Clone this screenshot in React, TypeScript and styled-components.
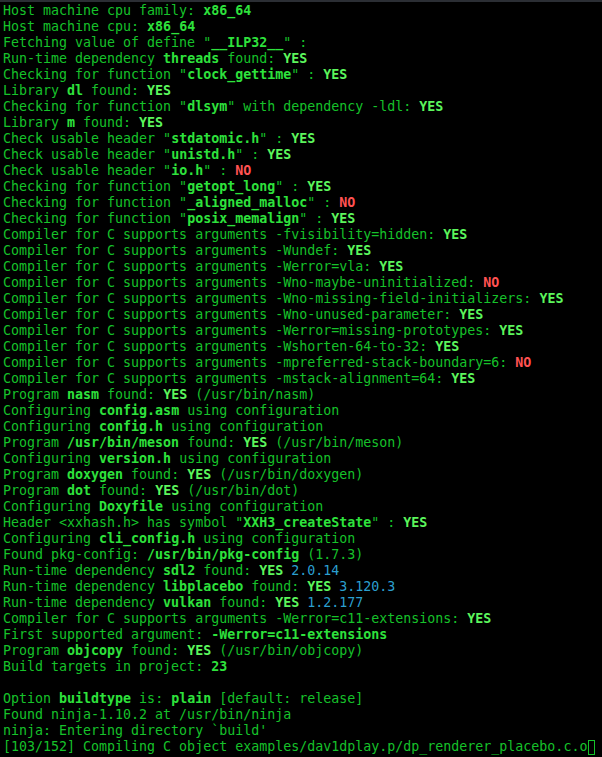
import React from "react";
import styled, { createGlobalStyle } from "styled-components";

const Global = createGlobalStyle`
  html, body { margin: 0; padding: 0; background: #000; }
  #root { width: 602px; height: 757px; }
`;

const Screen = styled.div`
  width: 602px;
  height: 757px;
  box-sizing: border-box;
  background: #000;
  border-top: 2px solid #2b2e34;
  padding: 1px 0 0 3px;
  overflow: hidden;
`;

const Output = styled.pre`
  margin: 0;
  font-family: "DejaVu Sans Mono", "Liberation Mono", monospace;
  font-size: 13.3px;
  line-height: 16px;
  color: #16c22a;
  white-space: pre;
`;

const Line = styled.div`
  height: 16px;
`;

const B = styled.span`
  font-weight: bold;
  color: #2ee23c;
`;

const Y = styled.span`
  font-weight: bold;
  color: #5cf65c;
`;

const N = styled.span`
  font-weight: bold;
  color: #ff5252;
`;

const V = styled.span`
  color: #2b9fcf;
`;

const Cursor = styled.span`
  display: inline-block;
  width: 7px;
  height: 15px;
  border: 1px solid #16c22a;
  box-sizing: border-box;
  margin-left: 1px;
  vertical-align: top;
  margin-top: 1px;
`;

const C = "Compiler for C supports arguments ";

export default function App() {
  const lines: React.ReactNode[] = [
    <>Host machine cpu family: <B>x86_64</B></>,
    <>Host machine cpu: <B>x86_64</B></>,
    <>Fetching value of define "<B>__ILP32__</B>" : </>,
    <>Run-time dependency <B>threads</B> found: <Y>YES</Y></>,
    <>Checking for function "<B>clock_gettime</B>" : <Y>YES</Y></>,
    <>Library <B>dl</B> found: <Y>YES</Y></>,
    <>Checking for function "<B>dlsym</B>" with dependency -ldl: <Y>YES</Y></>,
    <>Library <B>m</B> found: <Y>YES</Y></>,
    <>Check usable header "<B>stdatomic.h</B>" : <Y>YES</Y></>,
    <>Check usable header "<B>unistd.h</B>" : <Y>YES</Y></>,
    <>Check usable header "<B>io.h</B>" : <N>NO</N></>,
    <>Checking for function "<B>getopt_long</B>" : <Y>YES</Y></>,
    <>Checking for function "<B>_aligned_malloc</B>" : <N>NO</N></>,
    <>Checking for function "<B>posix_memalign</B>" : <Y>YES</Y></>,
    <>{C}-fvisibility=hidden: <Y>YES</Y></>,
    <>{C}-Wundef: <Y>YES</Y></>,
    <>{C}-Werror=vla: <Y>YES</Y></>,
    <>{C}-Wno-maybe-uninitialized: <N>NO</N></>,
    <>{C}-Wno-missing-field-initializers: <Y>YES</Y></>,
    <>{C}-Wno-unused-parameter: <Y>YES</Y></>,
    <>{C}-Werror=missing-prototypes: <Y>YES</Y></>,
    <>{C}-Wshorten-64-to-32: <Y>YES</Y></>,
    <>{C}-mpreferred-stack-boundary=6: <N>NO</N></>,
    <>{C}-mstack-alignment=64: <Y>YES</Y></>,
    <>Program <B>nasm</B> found: <Y>YES</Y> (/usr/bin/nasm)</>,
    <>Configuring <B>config.asm</B> using configuration</>,
    <>Configuring <B>config.h</B> using configuration</>,
    <>Program <B>/usr/bin/meson</B> found: <Y>YES</Y> (/usr/bin/meson)</>,
    <>Configuring <B>version.h</B> using configuration</>,
    <>Program <B>doxygen</B> found: <Y>YES</Y> (/usr/bin/doxygen)</>,
    <>Program <B>dot</B> found: <Y>YES</Y> (/usr/bin/dot)</>,
    <>Configuring <B>Doxyfile</B> using configuration</>,
    <>Header &lt;xxhash.h&gt; has symbol "<B>XXH3_createState</B>" : <Y>YES</Y></>,
    <>Configuring <B>cli_config.h</B> using configuration</>,
    <>Found pkg-config: <B>/usr/bin/pkg-config</B> (1.7.3)</>,
    <>Run-time dependency <B>sdl2</B> found: <Y>YES</Y> <V>2.0.14</V></>,
    <>Run-time dependency <B>libplacebo</B> found: <Y>YES</Y> <V>3.120.3</V></>,
    <>Run-time dependency <B>vulkan</B> found: <Y>YES</Y> <V>1.2.177</V></>,
    <>{C}-Werror=c11-extensions: <Y>YES</Y></>,
    <>First supported argument: <B>-Werror=c11-extensions</B></>,
    <>Program <B>objcopy</B> found: <Y>YES</Y> (/usr/bin/objcopy)</>,
    <>Build targets in project: <B>23</B></>,
    <></>,
    <>Option <B>buildtype</B> is: <B>plain</B> [default: release]</>,
    <>Found ninja-1.10.2 at /usr/bin/ninja</>,
    <>ninja: Entering directory `build'</>,
    <>[103/152] Compiling C object examples/dav1dplay.p/dp_renderer_placebo.c.o<Cursor /></>,
  ];
  return (
    <>
      <Global />
      <Screen>
        <Output>
          {lines.map((l, i) => (
            <Line key={i}>{l}</Line>
          ))}
        </Output>
      </Screen>
    </>
  );
}
